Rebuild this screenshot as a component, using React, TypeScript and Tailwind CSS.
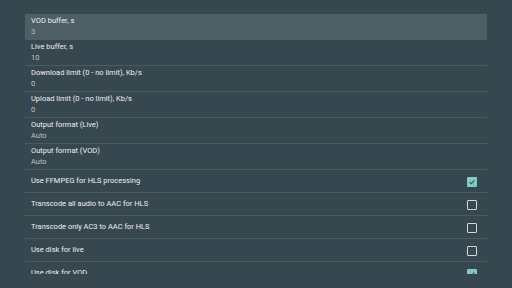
import React from "react";

type Item =
  | { title: string; value: string }
  | { title: string; checked: boolean };

const items: Item[] = [
  { title: "VOD buffer, s", value: "3" },
  { title: "Live buffer, s", value: "10" },
  { title: "Download limit (0 - no limit), Kb/s", value: "0" },
  { title: "Upload limit (0 - no limit), Kb/s", value: "0" },
  { title: "Output format (Live)", value: "Auto" },
  { title: "Output format (VOD)", value: "Auto" },
  { title: "Use FFMPEG for HLS processing", checked: true },
  { title: "Transcode all audio to AAC for HLS", checked: false },
  { title: "Transcode only AC3 to AAC for HLS", checked: false },
  { title: "Use disk for live", checked: false },
  { title: "Use disk for VOD", checked: true },
];

const Checkbox = ({ checked }: { checked: boolean }) =>
  checked ? (
    <div className="flex h-[10px] w-[10px] items-center justify-center rounded-[1px] bg-[#80cbc4]">
      <svg viewBox="0 0 10 10" className="h-[8px] w-[8px]">
        <path d="M2 5.2 L4.1 7.2 L8 3" fill="none" stroke="#2f4a4a" strokeWidth="1.3" />
      </svg>
    </div>
  ) : (
    <div className="h-[10px] w-[10px] rounded-[1px] border-[1.5px] border-[#cfd8dc]" />
  );

export default function App() {
  return (
    <div
      className="h-[288px] w-[512px] overflow-hidden bg-[#37474f] pt-[14px]"
      style={{ fontFamily: "Roboto, sans-serif" }}
    >
      <div className="ml-[25px] mr-[25px] h-[260px] overflow-hidden">
        {items.map((item, i) => (
          <div
            key={i}
            className={
              "flex items-center justify-between border-b border-[#4a5a61] pl-[6px] pr-[10px] " +
              ("value" in item ? "h-[26px] " : "h-[23px] ") +
              (i === 0 ? "bg-[#4e5e65] border-transparent" : "")
            }
          >
            <div className="flex flex-col justify-center text-[7.5px] leading-[10.5px]">
              <span className="text-[#eceff1]">{item.title}</span>
              {"value" in item && <span className="text-[#b8c3c8]">{item.value}</span>}
            </div>
            {"checked" in item && (
              <div className="translate-y-[1px]">
                <Checkbox checked={item.checked} />
              </div>
            )}
          </div>
        ))}
      </div>
    </div>
  );
}
